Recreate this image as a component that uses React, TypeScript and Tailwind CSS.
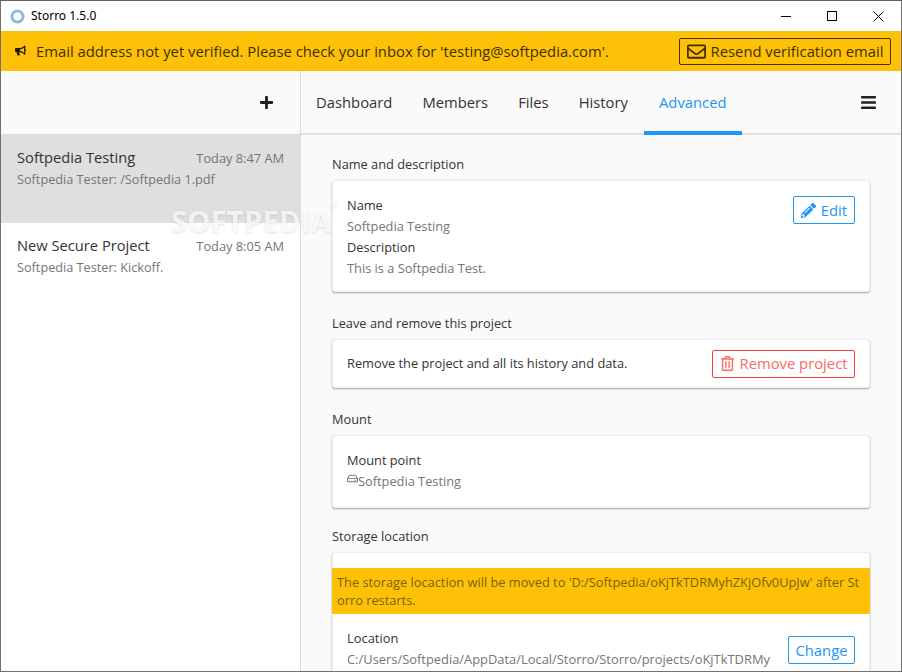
import { FaBars, FaBullhorn, FaPencilAlt, FaPlus, FaRegEnvelope, FaRegHdd, FaRegTrashAlt } from 'react-icons/fa';

const tabs = ['Dashboard', 'Members', 'Files', 'History', 'Advanced'];

const Heading = ({ children }: { children: string }) => (
  <h3 className="text-[12.8px] leading-[18px] text-[#333] mb-[7px]">{children}</h3>
);

const Card = ({ children, className }: { children: React.ReactNode; className: string }) => (
  <div className={`bg-white rounded-[3px] border border-[#eeeeee] shadow-[0_1px_2px_rgba(0,0,0,0.35)] ${className}`}>
    {children}
  </div>
);

export default function App() {
  return (
    <div
      className="w-[902px] h-[672px] overflow-hidden relative flex flex-col bg-[#fafafa] border border-[#707070] border-t-[#5f5f5f]"
      style={{ fontFamily: '"Open Sans", "Noto Sans", sans-serif' }}
    >
      <div className="h-[30px] shrink-0 bg-white flex items-center">
        <svg className="ml-[9px] w-[15px] h-[15px]" viewBox="0 0 16 16">
          <circle cx="8" cy="8" r="6.4" fill="none" stroke="#8dbce2" strokeWidth="2.2" />
          <circle cx="8" cy="8" r="5" fill="none" stroke="#4a7ba3" strokeWidth="0.7" />
        </svg>
        <span className="ml-[6px] text-[12px] text-black" style={{ fontFamily: '"Noto Sans", sans-serif' }}>
          Storro 1.5.0
        </span>
        <div className="ml-auto flex items-center">
          <div className="w-[46px] h-[30px] flex items-center justify-center">
            <div className="w-[10px] h-px bg-black" />
          </div>
          <div className="w-[46px] h-[30px] flex items-center justify-center">
            <div className="w-[10px] h-[10px] border border-black" />
          </div>
          <div className="w-[46px] h-[30px] flex items-center justify-center">
            <svg className="w-[11px] h-[11px]" viewBox="0 0 11 11">
              <path d="M0.5 0.5L10.5 10.5M10.5 0.5L0.5 10.5" stroke="#000" strokeWidth="1" fill="none" />
            </svg>
          </div>
        </div>
      </div>

      <div className="h-[40px] shrink-0 bg-[#ffc107] flex items-center pl-[14px] pr-[10px] text-[#3b3208]">
        <FaBullhorn className="text-[11px] text-[#1f1a05] -mt-px" />
        <span className="ml-[10px] text-[14.8px]">
          Email address not yet verified. Please check your inbox for 'testing@softpedia.com'.
        </span>
        <button className="ml-auto h-[27px] w-[212px] rounded-[2px] border border-[#3b3208] flex items-center justify-center gap-[5px] text-[14.8px]">
          <FaRegEnvelope className="text-[19px]" />
          <span>Resend verification email</span>
        </button>
      </div>

      <div className="flex-1 flex min-h-0">
        <div className="w-[299px] shrink-0 bg-white">
          <div className="h-[63px] bg-[#fafafa] flex items-center justify-end pr-[26px]">
            <FaPlus className="text-[15px] text-[#212121]" />
          </div>
          <div className="h-[89px] bg-[#dfdfdf] px-4 pt-[12px]">
            <div className="flex items-baseline justify-between">
              <span className="text-[14.7px] text-[#333]">Softpedia Testing</span>
              <span className="text-[12.8px] text-[#757575]">Today 8:47 AM</span>
            </div>
            <p className="text-[12.7px] text-[#757575] mt-[2px]">Softpedia Tester: /Softpedia 1.pdf</p>
          </div>
          <div className="h-[88px] px-4 pt-[11px]">
            <div className="flex items-baseline justify-between">
              <span className="text-[14.7px] text-[#333]">New Secure Project</span>
              <span className="text-[12.8px] text-[#757575]">Today 8:05 AM</span>
            </div>
            <p className="text-[12.7px] text-[#757575] mt-[2px]">Softpedia Tester: Kickoff.</p>
          </div>
        </div>

        <div className="flex-1 min-w-0 border-l border-[#dcdcdc] flex flex-col">
          <div className="h-[64px] shrink-0 border-b-2 border-[#e0e0e0] flex items-stretch pr-[24px]">
            {tabs.map((t) => (
              <div
                key={t}
                className={`px-[15px] flex items-center text-[14.8px] -mb-[2px] border-b-4 ${
                  t === 'Advanced' ? 'ml-px text-[#2196f3] border-[#2196f3]' : 'text-[#333] border-transparent'
                }`}
              >
                <span className="mt-[2px]">{t}</span>
              </div>
            ))}
            <div className="ml-auto flex items-center">
              <FaBars className="text-[17px] text-[#212121]" />
            </div>
          </div>

          <div className="flex-1 min-h-0 overflow-hidden pl-[31px] pr-[31px] pt-[20px]">
            <Heading>Name and description</Heading>
            <Card className="h-[112px] px-[14px] pt-[14px] flex justify-between mb-[22px]">
              <div className="text-[12.8px] leading-[21px]">
                <p className="text-[#333]">Name</p>
                <p className="text-[#757575]">Softpedia Testing</p>
                <p className="text-[#333]">Description</p>
                <p className="text-[#757575]">This is a Softpedia Test.</p>
              </div>
              <button className="h-[28px] w-[62px] mt-[1px] rounded-[2px] border border-[#2196f3] text-[#2196f3] text-[14.8px] flex items-center justify-center gap-[5px]">
                <FaPencilAlt className="text-[15px]" />
                Edit
              </button>
            </Card>

            <Heading>Leave and remove this project</Heading>
            <Card className="h-[49px] px-[14px] flex items-center justify-between mb-[22px]">
              <span className="text-[12.8px] text-[#333]">Remove the project and all its history and data.</span>
              <button className="h-[28px] w-[143px] rounded-[2px] border border-[#f44336] text-[#fb6a5e] text-[14.8px] flex items-center justify-center gap-[5px]">
                <FaRegTrashAlt className="text-[15px]" />
                Remove project
              </button>
            </Card>

            <Heading>Mount</Heading>
            <Card className="h-[73px] px-[14px] pt-[14px] mb-[19px]">
              <div className="text-[12.8px] leading-[21px]">
                <p className="text-[#333]">Mount point</p>
                <p className="text-[#757575] flex">
                  <FaRegHdd className="text-[11px] mt-[2px]" />
                  Softpedia Testing
                </p>
              </div>
            </Card>

            <Heading>Storage location</Heading>
            <Card className="h-[140px] pt-[15px]">
              <div className="h-[46px] -mx-px bg-[#ffc107] text-[#7a6206] text-[12.8px] leading-[18px] px-[5px] pt-[5px] break-all">
                The storage locaction will be moved to 'D:/Softpedia/oKjTkTDRMyhZKjOfv0UpJw' after Storro restarts.
              </div>
              <div className="px-[14px] pt-[14px] flex justify-between">
                <div className="text-[12.9px] leading-[21px]">
                  <p className="text-[#333]">Location</p>
                  <p className="text-[#757575]">C:/Users/Softpedia/AppData/Local/Storro/Storro/projects/oKjTkTDRMy</p>
                </div>
                <button className="h-[28px] w-[67px] mt-[8px] rounded-[2px] border border-[#2196f3] text-[#2196f3] text-[14.8px] flex items-center justify-center">
                  Change
                </button>
              </div>
            </Card>
          </div>
        </div>
      </div>

      <div className="absolute left-[170px] top-[198px] text-[29px] font-bold tracking-[0.3px] text-white/75 pointer-events-none [text-shadow:0_1px_3px_rgba(0,0,0,0.12)]">
        SOFTPEDIA<span className="text-[8px] align-top">®</span>
      </div>
    </div>
  );
}
